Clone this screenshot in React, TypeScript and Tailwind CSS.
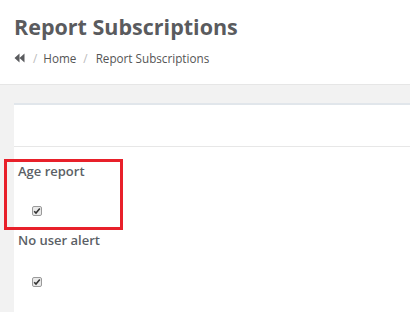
function Check() {
  return (
    <span className="inline-flex h-[10px] w-[10px] items-center justify-center rounded-[2px] border border-[#9a9a9a] bg-[#e9e9e9]">
      <svg width="8" height="8" viewBox="0 0 8 8">
        <path d="M1.2 4.2 L3 6 L6.8 1.6" fill="none" stroke="#333" strokeWidth="1.6" />
      </svg>
    </span>
  );
}

export default function App() {
  return (
    <div className="relative min-h-[328px] w-[410px] overflow-hidden bg-white font-['Open_Sans',sans-serif] text-[#5b5f66]">
      <div className="h-[85px] border-b border-[#e6e6e6] px-[14px] pt-[12px]">
        <h1 className="text-[21.5px] font-bold leading-[30px] text-[#5a5b5e]">Report Subscriptions</h1>
        <div className="mt-[7px] flex items-center text-[11.7px] leading-[18px] text-[#555]">
          <svg width="11" height="10" viewBox="0 0 11 10" className="mr-[8px]">
            <path d="M5.5 0.5 L0.5 5 L5.5 9.5 Z M10.5 0.5 L5.5 5 L10.5 9.5 Z" fill="#5a5b5e" />
          </svg>
          <span className="text-[#bbb]">/</span>
          <span className="ml-[6px]">Home</span>
          <span className="ml-[7px] text-[#bbb]">/</span>
          <span className="ml-[8px]">Report Subscriptions</span>
        </div>
      </div>
      <div className="h-[227px] bg-[#f2f2f2] pl-[14px] pt-[18px]">
        <div className="h-full border-t-2 border-[#e1e6eb] bg-white">
          <div className="h-[42px] border-b border-[#e7e7e7]" />
          <div className="pl-[4px] pt-[14px]">
            <div className="h-[69px]">
              <div className="text-[13px] font-semibold leading-[20px]">Age report</div>
              <div className="ml-[14px] mt-[25px] flex">
                <Check />
              </div>
            </div>
            <div>
              <div className="text-[13px] font-semibold leading-[20px]">No user alert</div>
              <div className="ml-[14px] mt-[27px] flex">
                <Check />
              </div>
            </div>
          </div>
        </div>
      </div>
      <div className="absolute left-[4px] top-[159px] h-[71px] w-[119px] border-[3px] border-[#e8202a]" />
    </div>
  );
}
